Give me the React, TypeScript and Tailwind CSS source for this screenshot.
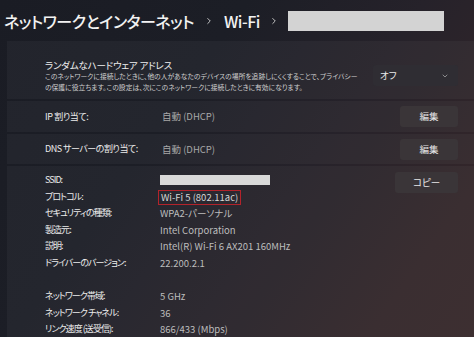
import React from 'react';
import { ChevronRight, ChevronDown } from 'lucide-react';

const jp = "font-['Noto_Sans_CJK_JP','Noto_Sans',sans-serif] [font-feature-settings:'palt'_1]";

const InfoRow = ({ label, children }: { label: string; children: React.ReactNode }) => (
  <>
    <div className="text-[#ececec] text-[9px] tracking-[-0.95px] whitespace-nowrap">{label}</div>
    <div className="text-[#bdbdbd] text-[9.5px] whitespace-nowrap">{children}</div>
  </>
);

const ActionButton = ({ text, className = '' }: { text: string; className?: string }) => (
  <button className={`h-[21px] shrink-0 rounded-[3px] bg-[#3a3538] text-[9.5px] text-[#e8e8e8] flex items-center justify-center ${className}`}>
    {text}
  </button>
);

export default function App() {
  return (
    <div
      className={`w-[474px] h-[337px] overflow-hidden flex flex-col bg-[linear-gradient(125deg,#1a1c24_0%,#1c1e26_35%,#26222a_60%,#33262a_85%,#36272a_100%)] ${jp}`}
    >
      {/* パンくず */}
      <header className="h-[41px] shrink-0 flex items-center pl-[4px] text-[#f2f2f2] text-[16px] tracking-[-0.5px] font-medium whitespace-nowrap">
        <span>ネットワークとインターネット</span>
        <ChevronRight className="mx-[10px] shrink-0 text-[#d0d0d0]" size={10} strokeWidth={2.2} />
        <span>Wi-Fi</span>
        <ChevronRight className="mx-[9px] shrink-0 text-[#d0d0d0]" size={10} strokeWidth={2.2} />
        <div className="w-[156px] h-[20px] shrink-0 bg-[#d3d3d3]" />
      </header>

      <div className="ml-[7px] flex-1 flex flex-col gap-[2px]">
        {/* ランダムなハードウェア アドレス */}
        <section className="h-[58px] bg-white/[0.035] flex items-start pt-[19px] pl-[38px] pr-[16px]">
          <div className="flex-1 min-w-0 whitespace-nowrap">
            <div className="text-[9.5px] tracking-[-0.2px] leading-[11px] text-[#f0f0f0]">ランダムなハードウェア アドレス</div>
            <p className="text-[6.8px] leading-[11px] text-[#cfcfcf]">
              このネットワークに接続したときに、他の人があなたのデバイスの場所を追跡しにくくすることで、プライバシー
              <br />
              の保護に役立ちます。この設定は、次にこのネットワークに接続したときに有効になります。
            </p>
          </div>
          <div className="mt-[5px] w-[85px] h-[21px] shrink-0 rounded-[3px] bg-[#2f2d33] flex items-center justify-between pl-[7px] pr-[9px] text-[9.5px] text-[#ececec]">
            <span>オフ</span>
            <ChevronDown size={8} strokeWidth={2} className="text-[#bbbbbb]" />
          </div>
        </section>

        {/* IP 割り当て */}
        <section className="h-[31px] bg-white/[0.035] flex items-center pl-[38px] pr-[16px] whitespace-nowrap">
          <div className="w-[117px] text-[9px] tracking-[-0.4px] text-[#ececec]">IP 割り当て:</div>
          <div className="flex-1 text-[9.5px] text-[#a8a8a8]">自動 (DHCP)</div>
          <ActionButton text="編集" className="w-[58px]" />
        </section>

        {/* DNS サーバーの割り当て */}
        <section className="h-[30px] bg-white/[0.035] flex items-center pl-[38px] pr-[16px] whitespace-nowrap">
          <div className="w-[117px] text-[9px] tracking-[-0.5px] text-[#ececec]">DNS サーバーの割り当て:</div>
          <div className="flex-1 text-[9.5px] text-[#a8a8a8]">自動 (DHCP)</div>
          <ActionButton text="編集" className="w-[58px]" />
        </section>

        {/* 詳細 */}
        <section className="flex-1 bg-white/[0.035] flex items-start pt-[6px] pl-[38px] pr-[16px]">
          <div className="flex-1 grid grid-cols-[115px_1fr] leading-[16.6px]">
            <InfoRow label="SSID:">
              <div className="h-[16.6px] flex items-center">
                <div className="w-[110px] h-[10px] bg-[#d9d9d9]" />
              </div>
            </InfoRow>
            <InfoRow label="プロトコル:">
              <span className="inline-block -ml-[2px] px-[2px] leading-[13px] border-[1.5px] border-[#b3232b] text-[#d6d6d6]">
                Wi-Fi 5 (802.11ac)
              </span>
            </InfoRow>
            <InfoRow label="セキュリティの種類:">WPA2-パーソナル</InfoRow>
            <InfoRow label="製造元:">Intel Corporation</InfoRow>
            <InfoRow label="説明:">Intel(R) Wi-Fi 6 AX201 160MHz</InfoRow>
            <InfoRow label="ドライバーのバージョン:">22.200.2.1</InfoRow>
            <div className="col-span-2 h-[16.6px]" />
            <InfoRow label="ネットワーク帯域:">5 GHz</InfoRow>
            <InfoRow label="ネットワーク チャネル:">36</InfoRow>
            <InfoRow label="リンク速度 (送受信):">866/433 (Mbps)</InfoRow>
          </div>
          <ActionButton text="コピー" className="w-[63px]" />
        </section>
      </div>
    </div>
  );
}
